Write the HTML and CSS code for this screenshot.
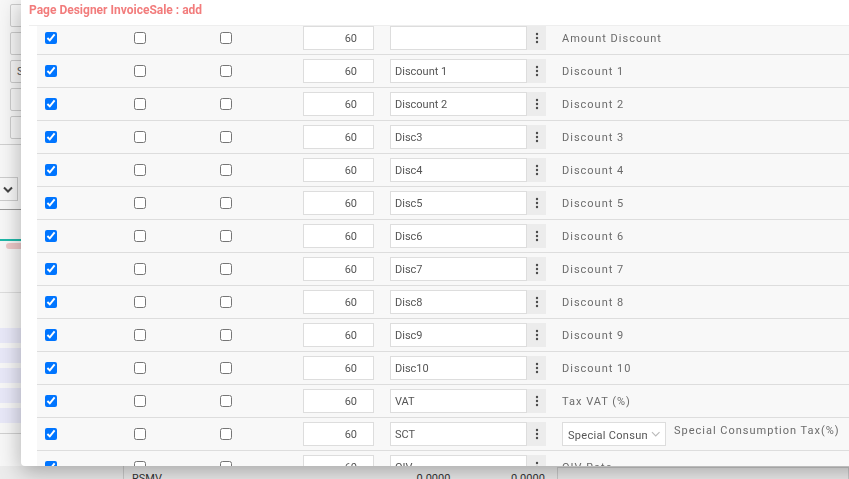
FILE: index.html
```html
<!DOCTYPE html>
<html lang="en">
<head>
    <meta charset="UTF-8">
    <meta name="viewport" content="width=device-width, initial-scale=1.0">
    <title>Page Designer</title>
    <link rel="stylesheet" href="styles.css">
</head>
<body>

    <!-- page behind the dialog -->
    <div class="app">
      <div class="app-main">
        <div class="tool-box"></div>
        <div class="tool-box"></div>
        <div class="tool-box">S</div>
        <div class="tool-box"></div>
        <div class="tool-box"></div>
        <hr class="rule">
        <div class="app-select">
          <svg width="10" height="7" viewBox="0 0 10 7"><path d="M1 1.5 L5 5.5 L9 1.5" fill="none" stroke="#444" stroke-width="2"/></svg>
        </div>
        <hr class="rule dark">
        <div class="tab-line"></div>
        <div class="pill"></div>
        <hr class="rule light">
        <div class="grid-rows">
          <div class="grid-row"></div>
          <div class="grid-row"></div>
          <div class="grid-row"></div>
          <div class="grid-row"></div>
          <div class="grid-row"></div>
        </div>
        <hr class="rule">
      </div>
      <div class="app-footer">
        <div class="foot-cell name">RSMV</div>
        <div class="foot-cell num">0.0000</div>
        <div class="foot-cell num">0.0000</div>
        <div class="foot-box"></div>
      </div>
    </div>

    <div class="modal">
      <div class="modal-title">Page Designer InvoiceSale : add</div>
      <div class="modal-body">
        <div class="fields">

          <div class="field-row">
            <div class="cell"><input type="checkbox" checked></div>
            <div class="cell"><input type="checkbox"></div>
            <div class="cell"><input type="checkbox"></div>
            <div class="cell"><input class="num-input" type="text" value="60"></div>
            <div class="cell"><div class="input-group"><input type="text" value=""><span class="kebab"><svg width="4" height="12" viewBox="0 0 4 12"><circle cx="2" cy="2" r="1.2"/><circle cx="2" cy="6" r="1.2"/><circle cx="2" cy="10" r="1.2"/></svg></span></div></div>
            <div class="cell label">Amount Discount</div>
          </div>

          <div class="field-row">
            <div class="cell"><input type="checkbox" checked></div>
            <div class="cell"><input type="checkbox"></div>
            <div class="cell"><input type="checkbox"></div>
            <div class="cell"><input class="num-input" type="text" value="60"></div>
            <div class="cell"><div class="input-group"><input type="text" value="Discount 1"><span class="kebab"><svg width="4" height="12" viewBox="0 0 4 12"><circle cx="2" cy="2" r="1.2"/><circle cx="2" cy="6" r="1.2"/><circle cx="2" cy="10" r="1.2"/></svg></span></div></div>
            <div class="cell label">Discount 1</div>
          </div>

          <div class="field-row">
            <div class="cell"><input type="checkbox" checked></div>
            <div class="cell"><input type="checkbox"></div>
            <div class="cell"><input type="checkbox"></div>
            <div class="cell"><input class="num-input" type="text" value="60"></div>
            <div class="cell"><div class="input-group"><input type="text" value="Discount 2"><span class="kebab"><svg width="4" height="12" viewBox="0 0 4 12"><circle cx="2" cy="2" r="1.2"/><circle cx="2" cy="6" r="1.2"/><circle cx="2" cy="10" r="1.2"/></svg></span></div></div>
            <div class="cell label">Discount 2</div>
          </div>

          <div class="field-row">
            <div class="cell"><input type="checkbox" checked></div>
            <div class="cell"><input type="checkbox"></div>
            <div class="cell"><input type="checkbox"></div>
            <div class="cell"><input class="num-input" type="text" value="60"></div>
            <div class="cell"><div class="input-group"><input type="text" value="Disc3"><span class="kebab"><svg width="4" height="12" viewBox="0 0 4 12"><circle cx="2" cy="2" r="1.2"/><circle cx="2" cy="6" r="1.2"/><circle cx="2" cy="10" r="1.2"/></svg></span></div></div>
            <div class="cell label">Discount 3</div>
          </div>

          <div class="field-row">
            <div class="cell"><input type="checkbox" checked></div>
            <div class="cell"><input type="checkbox"></div>
            <div class="cell"><input type="checkbox"></div>
            <div class="cell"><input class="num-input" type="text" value="60"></div>
            <div class="cell"><div class="input-group"><input type="text" value="Disc4"><span class="kebab"><svg width="4" height="12" viewBox="0 0 4 12"><circle cx="2" cy="2" r="1.2"/><circle cx="2" cy="6" r="1.2"/><circle cx="2" cy="10" r="1.2"/></svg></span></div></div>
            <div class="cell label">Discount 4</div>
          </div>

          <div class="field-row">
            <div class="cell"><input type="checkbox" checked></div>
            <div class="cell"><input type="checkbox"></div>
            <div class="cell"><input type="checkbox"></div>
            <div class="cell"><input class="num-input" type="text" value="60"></div>
            <div class="cell"><div class="input-group"><input type="text" value="Disc5"><span class="kebab"><svg width="4" height="12" viewBox="0 0 4 12"><circle cx="2" cy="2" r="1.2"/><circle cx="2" cy="6" r="1.2"/><circle cx="2" cy="10" r="1.2"/></svg></span></div></div>
            <div class="cell label">Discount 5</div>
          </div>

          <div class="field-row">
            <div class="cell"><input type="checkbox" checked></div>
            <div class="cell"><input type="checkbox"></div>
            <div class="cell"><input type="checkbox"></div>
            <div class="cell"><input class="num-input" type="text" value="60"></div>
            <div class="cell"><div class="input-group"><input type="text" value="Disc6"><span class="kebab"><svg width="4" height="12" viewBox="0 0 4 12"><circle cx="2" cy="2" r="1.2"/><circle cx="2" cy="6" r="1.2"/><circle cx="2" cy="10" r="1.2"/></svg></span></div></div>
            <div class="cell label">Discount 6</div>
          </div>

          <div class="field-row">
            <div class="cell"><input type="checkbox" checked></div>
            <div class="cell"><input type="checkbox"></div>
            <div class="cell"><input type="checkbox"></div>
            <div class="cell"><input class="num-input" type="text" value="60"></div>
            <div class="cell"><div class="input-group"><input type="text" value="Disc7"><span class="kebab"><svg width="4" height="12" viewBox="0 0 4 12"><circle cx="2" cy="2" r="1.2"/><circle cx="2" cy="6" r="1.2"/><circle cx="2" cy="10" r="1.2"/></svg></span></div></div>
            <div class="cell label">Discount 7</div>
          </div>

          <div class="field-row">
            <div class="cell"><input type="checkbox" checked></div>
            <div class="cell"><input type="checkbox"></div>
            <div class="cell"><input type="checkbox"></div>
            <div class="cell"><input class="num-input" type="text" value="60"></div>
            <div class="cell"><div class="input-group"><input type="text" value="Disc8"><span class="kebab"><svg width="4" height="12" viewBox="0 0 4 12"><circle cx="2" cy="2" r="1.2"/><circle cx="2" cy="6" r="1.2"/><circle cx="2" cy="10" r="1.2"/></svg></span></div></div>
            <div class="cell label">Discount 8</div>
          </div>

          <div class="field-row">
            <div class="cell"><input type="checkbox" checked></div>
            <div class="cell"><input type="checkbox"></div>
            <div class="cell"><input type="checkbox"></div>
            <div class="cell"><input class="num-input" type="text" value="60"></div>
            <div class="cell"><div class="input-group"><input type="text" value="Disc9"><span class="kebab"><svg width="4" height="12" viewBox="0 0 4 12"><circle cx="2" cy="2" r="1.2"/><circle cx="2" cy="6" r="1.2"/><circle cx="2" cy="10" r="1.2"/></svg></span></div></div>
            <div class="cell label">Discount 9</div>
          </div>

          <div class="field-row">
            <div class="cell"><input type="checkbox" checked></div>
            <div class="cell"><input type="checkbox"></div>
            <div class="cell"><input type="checkbox"></div>
            <div class="cell"><input class="num-input" type="text" value="60"></div>
            <div class="cell"><div class="input-group"><input type="text" value="Disc10"><span class="kebab"><svg width="4" height="12" viewBox="0 0 4 12"><circle cx="2" cy="2" r="1.2"/><circle cx="2" cy="6" r="1.2"/><circle cx="2" cy="10" r="1.2"/></svg></span></div></div>
            <div class="cell label">Discount 10</div>
          </div>

          <div class="field-row">
            <div class="cell"><input type="checkbox" checked></div>
            <div class="cell"><input type="checkbox"></div>
            <div class="cell"><input type="checkbox"></div>
            <div class="cell"><input class="num-input" type="text" value="60"></div>
            <div class="cell"><div class="input-group"><input type="text" value="VAT"><span class="kebab"><svg width="4" height="12" viewBox="0 0 4 12"><circle cx="2" cy="2" r="1.2"/><circle cx="2" cy="6" r="1.2"/><circle cx="2" cy="10" r="1.2"/></svg></span></div></div>
            <div class="cell label">Tax VAT (%)</div>
          </div>

          <div class="field-row">
            <div class="cell"><input type="checkbox" checked></div>
            <div class="cell"><input type="checkbox"></div>
            <div class="cell"><input type="checkbox"></div>
            <div class="cell"><input class="num-input" type="text" value="60"></div>
            <div class="cell"><div class="input-group"><input type="text" value="SCT"><span class="kebab"><svg width="4" height="12" viewBox="0 0 4 12"><circle cx="2" cy="2" r="1.2"/><circle cx="2" cy="6" r="1.2"/><circle cx="2" cy="10" r="1.2"/></svg></span></div></div>
            <div class="cell label">
              <div class="fake-select">
                <span class="fake-select-text">Special Consumption Tax</span>
                <svg width="10" height="6" viewBox="0 0 10 6"><path d="M1 1 L5 5 L9 1" fill="none" stroke="#bbb" stroke-width="1.2"/></svg>
              </div>
              <span class="label-top">Special Consumption Tax(%)</span>
            </div>
          </div>

          <div class="field-row">
            <div class="cell"><input type="checkbox" checked></div>
            <div class="cell"><input type="checkbox"></div>
            <div class="cell"><input type="checkbox"></div>
            <div class="cell"><input class="num-input" type="text" value="60"></div>
            <div class="cell"><div class="input-group"><input type="text" value="OIV"><span class="kebab"><svg width="4" height="12" viewBox="0 0 4 12"><circle cx="2" cy="2" r="1.2"/><circle cx="2" cy="6" r="1.2"/><circle cx="2" cy="10" r="1.2"/></svg></span></div></div>
            <div class="cell label">OIV Rate</div>
          </div>

        </div>
      </div>
    </div>

</body>
</html>
```

FILE: styles.css
```css
html {
  box-sizing: border-box;
}

*, *:before, *:after {
  box-sizing: inherit;
}

body {
  margin: 0;
  height: 100vh;
  overflow: hidden;
  font-family: Roboto, "Liberation Sans", sans-serif;
  background: #f7f7f7;
}

/* ---- page behind the dialog ---- */

.app-main {
  height: 466px;
  padding-top: 4px;
  overflow: hidden;
}

.tool-box {
  width: 200px;
  height: 23px;
  margin: 0 0 5px 10px;
  padding-left: 6px;
  border: 1px solid #ccc;
  border-radius: 2px;
  font-size: 11px;
  line-height: 21px;
  color: #555;
}

.rule {
  margin: 3px 0 0;
  border: 0;
  border-top: 1px solid #d0d0d0;
}

.rule.dark {
  margin-top: 8px;
  border-top-color: #9a9a9a;
}

.rule.light {
  margin-top: 43px;
  border-top-color: #ddd;
}

.app-select {
  width: 20px;
  height: 24px;
  margin: 32px 0 0 -2px;
  border: 1px solid #ccc;
  display: flex;
  align-items: center;
  justify-content: center;
}

.tab-line {
  margin-top: 29px;
  height: 2px;
  background: #20b8a8;
}

.pill {
  width: 60px;
  height: 6px;
  margin: 2px 0 0 6px;
  border-radius: 3px;
  background: #ecc8c8;
}

.grid-rows {
  margin-top: 35px;
  display: flex;
  flex-direction: column;
  gap: 5px;
}

.grid-row {
  height: 15px;
  background: #e8e8f8;
}

.grid-rows + .rule {
  margin-top: 10px;
}

.app-footer {
  height: 30px;
  display: flex;
  align-items: flex-start;
  background: #ececec;
  font-size: 11px;
  color: #333;
}

.foot-cell {
  padding-top: 6px;
}

.foot-cell.name {
  margin-left: 123px;
  width: 246px;
  padding-left: 8px;
  border-left: 1px solid #ccc;
  height: 30px;
}

.foot-cell.num {
  width: 90px;
  text-align: right;
}

.foot-cell.num + .foot-cell.num {
  width: 97px;
}

.foot-box {
  margin: 1px 0 0 12px;
  width: 300px;
  height: 24px;
  border: 1px solid #ccc;
}

/* ---- dialog ---- */

.modal {
  position: fixed;
  top: 0;
  left: 21px;
  width: 860px;
  height: 466px;
  background: white;
  border-radius: 0 0 0 4px;
  overflow: hidden;
  box-shadow: 0 6px 22px rgba(0,0,0,0.3);
}

.modal-title {
  height: 25px;
  padding: 0 8px;
  font-size: 12px;
  font-weight: 700;
  line-height: 21px;
  color: #f27c7c;
}

.modal-body {
  height: 441px;
  margin-left: 8px;
  padding-left: 8px;
  border-top: 1px solid #eee;
  overflow: hidden;
}

.fields {
  margin-top: -4px;
}

.field-row {
  display: grid;
  grid-template-columns: 89px 86px 83px 87px 172px 1fr;
  height: 33px;
  background: #f8f8f8;
  border-bottom: 1px solid #ddd;
}

.cell {
  display: flex;
  align-items: center;
  padding-left: 8px;
}

.cell input[type="checkbox"] {
  width: 12px;
  height: 12px;
  margin: 0;
}

.cell input[type="text"] {
  height: 24px;
  margin: 0;
  padding: 0 5px 0 4px;
  border: 1px solid #ddd;
  border-radius: 0;
  font-family: Roboto, sans-serif;
  font-size: 11px;
  color: #555;
  background: white;
  outline: 0;
}

.cell .num-input {
  width: 71px;
  padding-right: 16px !important;
  text-align: right;
}

.input-group {
  display: flex;
  width: 156px;
}

.input-group input {
  width: 137px;
}

.kebab {
  width: 19px;
  height: 24px;
  background: #ececec;
  display: flex;
  align-items: center;
  justify-content: center;
}

.kebab svg {
  fill: #4a4a4a;
}

.label {
  font-size: 11px;
  letter-spacing: 1px;
  color: #6b6b6b;
}

.fake-select {
  width: 104px;
  height: 24px;
  padding: 0 5px;
  border: 1px solid #ddd;
  background: white;
  display: flex;
  align-items: center;
  gap: 4px;
  letter-spacing: 0.3px;
  color: #555;
}

.fake-select-text {
  width: 83px;
  overflow: hidden;
  white-space: nowrap;
  padding-top: 3px;
}

.label-top {
  align-self: flex-start;
  margin: 6px 0 0 8px;
}
```
